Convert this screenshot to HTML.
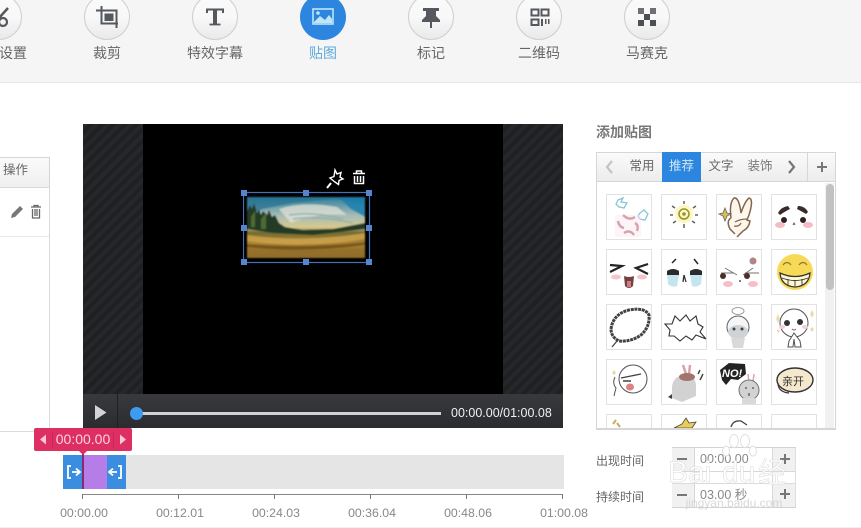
<!DOCTYPE html>
<html><head><meta charset="utf-8">
<style>
html,body{margin:0;padding:0;background:#fff}
#p{position:relative;width:861px;height:528px;overflow:hidden;background:#fff;font-family:"Liberation Sans","Noto Sans CJK SC",sans-serif;color:#555;filter:blur(.3px)}
.a{position:absolute}
.c{position:absolute;top:-6px;width:44px;height:44px;border-radius:50%;border:1px solid #cfcfcf;background:linear-gradient(#fafafa,#f8f8f8 50%,#e9e9e9)}
.l{position:absolute;top:44px;width:100px;text-align:center;font-size:14px;line-height:18px;color:#666}
.s{position:absolute;width:44px;height:44px;border:1px solid #e2e2e2;background:#fff;overflow:hidden}
.s svg{position:absolute;left:0;top:0;width:44px;height:44px;filter:blur(.35px);opacity:.92}
.h{position:absolute;width:6px;height:6px;background:#5585cc}
.t{position:absolute;top:505px;width:70px;text-align:center;font-size:12.3px;line-height:16px;color:#888}
.k{position:absolute;top:494px;width:1px;height:5px;background:#777}
.tab{position:absolute;top:152px;height:30px;line-height:29px;text-align:center;font-size:12.5px;color:#666}
</style></head><body><div id="p">

<div class="a" style="left:0;top:0;width:861px;height:82px;background:#f5f5f5;border-bottom:1px solid #e6e6e6"></div>

<div class="c" style="left:-24px"></div>
<div class="c" style="left:84px"></div>
<div class="c" style="left:192px"></div>
<div class="c" style="left:300px;width:46px;height:46px;border:0;background:#2c86e0"></div>
<div class="c" style="left:408px"></div>
<div class="c" style="left:516px"></div>
<div class="c" style="left:624px"></div>

<svg class="a" style="left:0;top:0" width="861" height="40" viewBox="0 0 861 40">
 <circle cx="3" cy="22" r="4" fill="none" stroke="#55585c" stroke-width="2.2"/>
 <path d="M-1 18L8 8" stroke="#55585c" stroke-width="2.5" fill="none"/>
 <path d="M96 10.500H116.500V28M101.500 6V23.500H118" fill="none" stroke="#55585c" stroke-width="2"/>
 <rect x="104.500" y="13.500" width="9" height="7.500" fill="#55585c"/>
 <path d="M207 13V9.500H223V13" fill="none" stroke="#55585c" stroke-width="2"/>
 <path d="M213 9.500H217V24H213Z" fill="#55585c"/>
 <path d="M209.500 24.500H220.500" stroke="#55585c" stroke-width="1.800"/>
 <rect x="313" y="9" width="20" height="15" fill="none" stroke="#bfe6f7" stroke-width="1.600"/>
 <path d="M314 22L320 16L325 20L329 15L332 19V23H314Z" fill="#bfe6f7"/>
 <circle cx="318" cy="13" r="1.800" fill="#bfe6f7"/>
 <path d="M423 8H439V11H436V16L440 20V22H422V20L426 16V11H423ZM430 22H432V28H430Z" fill="#55585c"/>
 <path d="M531.500 9.500h7v6h-7zM541.500 9.500h7v6h-7zM531.500 19.500h7v5.500h-7z" fill="none" stroke="#55585c" stroke-width="2"/>
 <path d="M541 19h2v7h-2zM545 19h1.500v5H545zM548 19h1.500v5H548z" fill="#55585c"/>
 <path d="M638 8h6v6h-6zM650 8h6v6h-6z" fill="#6e7074"/>
 <path d="M644 14h6v6h-6zM638 20h6v6h-6zM650 20h6v6h-6z" fill="#4c4f53"/>
</svg>

<div class="l" style="left:-37px">设置</div>
<div class="l" style="left:57px">裁剪</div>
<div class="l" style="left:165px">特效字幕</div>
<div class="l" style="left:273px;color:#5fa9dc">贴图</div>
<div class="l" style="left:381px">标记</div>
<div class="l" style="left:489px">二维码</div>
<div class="l" style="left:597px">马赛克</div>

<!-- left table -->
<div class="a" style="left:0;top:157px;width:49px;height:29px;background:linear-gradient(#fafafa,#efefef);border-top:1px solid #d5d5d5;border-bottom:1px solid #d9d9d9;border-right:1px solid #d5d5d5"></div>
<div class="a" style="left:3px;top:161px;font-size:12.500px;line-height:18px;color:#666">操作</div>
<div class="a" style="left:49px;top:186px;width:1px;height:245px;background:#d9d9d9"></div>
<div class="a" style="left:0;top:236px;width:49px;height:1px;background:#e8e8e8"></div>
<div class="a" style="left:0;top:431px;width:83px;height:1px;background:#dcdcdc"></div>
<svg class="a" style="left:8px;top:202px" width="36" height="20" viewBox="0 0 36 20">
 <path d="M3 16L4 12L12 4L15 7L7 15Z" fill="#777"/>
 <path d="M23 5H33M24.500 7V16H31.500V7M27 7V14M29 7V14M26 5V3.500H30V5" fill="none" stroke="#666" stroke-width="1.300"/>
</svg>

<!-- video -->
<div class="a" style="left:83px;top:124px;width:480px;height:270px;background:repeating-linear-gradient(135deg,#25272a 0 4px,#1e2022 4px 8px)"></div>
<div class="a" style="left:143px;top:124px;width:360px;height:270px;background:#000"></div>

<svg class="a" style="left:243px;top:165px" width="130" height="100" viewBox="0 0 130 100">
 <defs>
  <linearGradient id="sky" x1="0" y1="0" x2="0" y2="1"><stop offset="0" stop-color="#2f7f9c"/><stop offset=".3" stop-color="#a5bcb8"/><stop offset=".5" stop-color="#d9c98c"/><stop offset=".58" stop-color="#6f6a30"/><stop offset=".75" stop-color="#ad8432"/><stop offset="1" stop-color="#7a5c22"/></linearGradient>
  <filter id="b"><feGaussianBlur stdDeviation=".7"/></filter>
 </defs>
 <g filter="url(#b)">
 <rect x="4" y="32" width="118" height="61" fill="url(#sky)"/>
 <path d="M4 32H122V38L92 34L50 38L20 44L4 50Z" fill="#236f90" opacity=".7"/>
 <path d="M96 33H122V52L108 44Z" fill="#1a7fae" opacity=".85"/>
 <path d="M36 44Q60 36 94 42L104 50Q70 48 48 58Z" fill="#e2e2d6" opacity=".75"/>
 <path d="M46 50Q70 46 100 54M50 54Q75 50 110 58" stroke="#8fb0b0" fill="none" stroke-width="1.400"/>
 <path d="M4 46L7 40L9 44L11 38L14 48L16 44L18 50L20 46L24 50L26 45L29 52L32 50L36 58L42 62L60 65L90 64L122 58V64L70 70L30 68L4 64Z" fill="#243a26"/>
 <path d="M8 52L12 46V62H8ZM18 54L23 48V64H18Z" fill="#4f6a30"/>
 <path d="M4 70Q60 78 122 68V74Q60 84 4 76Z" fill="#d1a54e" opacity=".8"/>
 <path d="M4 79Q60 84 122 77V80Q60 88 4 82Z" fill="#5c3f14" opacity=".6"/>
 <path d="M4 85Q60 90 122 84V93H4Z" fill="#96702c" opacity=".8"/>
 </g>
 <rect x="0.500" y="27.500" width="126" height="70" fill="none" stroke="#4670b8" stroke-width="1.200"/>
 <path d="M92 5L94 9L98 7.500L97 12L100 14L96 15.500L95.500 19.500L92 17L90 15.500L87 13L91 11.500Z" fill="none" stroke="#fff" stroke-width="1.400"/>
 <path d="M88 18L84 23" stroke="#fff" stroke-width="2"/>
 <path d="M110 8.500H122M111.500 11V18.500H120.500V11M114.500 11V17M117.500 11V17M113.500 8V6H118.500V8" fill="none" stroke="#fff" stroke-width="1.500"/>
</svg>
<div class="h" style="left:241px;top:190px"></div><div class="h" style="left:303px;top:190px"></div><div class="h" style="left:366px;top:190px"></div>
<div class="h" style="left:241px;top:225px"></div><div class="h" style="left:366px;top:225px"></div>
<div class="h" style="left:241px;top:259px"></div><div class="h" style="left:303px;top:259px"></div><div class="h" style="left:366px;top:259px"></div>

<!-- controls -->
<div class="a" style="left:83px;top:394px;width:480px;height:34px;background:linear-gradient(#37393c,#2a2c2f)"></div>
<div class="a" style="left:117px;top:394px;width:1px;height:34px;background:#1f2022"></div>
<svg class="a" style="left:94px;top:404px" width="14" height="18"><path d="M1 1L12.500 8.500L1 16Z" fill="#d4d4d4"/></svg>
<div class="a" style="left:140px;top:412px;width:301px;height:3px;background:#d2d2d2"></div>
<div class="a" style="left:130px;top:407px;width:13px;height:13px;border-radius:50%;background:#3d9bf0"></div>
<div class="a" style="left:451px;top:405px;font-size:12.500px;line-height:16px;color:#f0f0f0;white-space:nowrap">00:00.00/01:00.08</div>

<!-- timeline -->
<div class="a" style="left:63px;top:455px;width:501px;height:34px;background:#e5e5e5"></div>
<div class="a" style="left:63px;top:455px;width:63px;height:34px;background:#3a8ddf"></div>
<div class="a" style="left:83px;top:455px;width:24px;height:34px;background:#b57de8"></div>
<div class="a" style="left:82px;top:451px;width:2px;height:38px;background:#8a2a70"></div>
<svg class="a" style="left:63px;top:455px" width="64" height="34" viewBox="0 0 64 34">
 <path d="M8 11H5V23H8M9 17H16M13 13.500L17 17L13 20.500" fill="none" stroke="#fff" stroke-width="1.800"/>
 <path d="M55 11H58V23H55M54 17H47M50 13.500L46 17L50 20.500" fill="none" stroke="#fff" stroke-width="1.800"/>
</svg>
<div class="a" style="left:34px;top:428px;width:98px;height:23px;background:#de2f63;border-radius:2px"></div>
<svg class="a" style="left:34px;top:428px" width="98" height="30" viewBox="0 0 98 30">
 <path d="M45 23H53L49 27Z" fill="#de2f63"/>
 <path d="M12 6.500V16.500L6 11.500Z" fill="#f6c7d6"/>
 <path d="M86 6.500V16.500L92 11.500Z" fill="#f6c7d6"/>
 <path d="M18.500 4V20M79.500 4V20" stroke="#cc2556" stroke-width="1"/>
</svg>
<div class="a" style="left:34px;top:431px;width:98px;text-align:center;font-size:14px;line-height:17px;color:#f9d3de">00:00.00</div>

<div class="a" style="left:83px;top:494px;width:480px;height:1px;background:#888"></div>
<div class="k" style="left:82px"></div><div class="k" style="left:178px"></div><div class="k" style="left:274px"></div><div class="k" style="left:370px"></div><div class="k" style="left:466px"></div><div class="k" style="left:562px"></div>
<div class="t" style="left:49px">00:00.00</div>
<div class="t" style="left:145px">00:12.01</div>
<div class="t" style="left:241px">00:24.03</div>
<div class="t" style="left:337px">00:36.04</div>
<div class="t" style="left:433px">00:48.06</div>
<div class="t" style="left:529px">01:00.08</div>
<div class="a" style="left:0;top:527px;width:861px;height:1px;background:#f0f0f0"></div>

<!-- right panel -->
<div class="a" style="left:596px;top:123px;font-size:14px;font-weight:700;line-height:18px;color:#6a6a6a;opacity:.9">添加贴图</div>
<div class="a" style="left:596px;top:152px;width:238px;height:276px;border:1px solid #d6d6d6;background:#fff"></div>
<div class="a" style="left:597px;top:153px;width:238px;height:29px;background:linear-gradient(#fafafa,#ececec);border-bottom:1px solid #d6d6d6;box-sizing:border-box"></div>
<div class="a" style="left:662px;top:152px;width:39px;height:30px;background:#2c86e0"></div>
<div class="tab" style="left:622px;width:40px">常用</div>
<div class="tab" style="left:662px;width:39px;color:#cfe6f8">推荐</div>
<div class="tab" style="left:701px;width:40px">文字</div>
<div class="tab" style="left:740px;width:40px;color:#777">装饰</div>
<div class="a" style="left:807px;top:153px;width:1px;height:29px;background:#d6d6d6"></div>
<svg class="a" style="left:596px;top:152px" width="240" height="30" viewBox="0 0 240 30">
 <path d="M16 9L11 15L16 21" fill="none" stroke="#c4c4c4" stroke-width="2.200"/>
 <path d="M193 9L198 15L193 21" fill="none" stroke="#777" stroke-width="2.200"/>
 <path d="M221 15H231M226 10V20" stroke="#777" stroke-width="2"/>
</svg>

<div class="a" style="left:825px;top:183px;width:9px;height:245px;background:#f1f1f1"></div>
<div class="a" style="left:826px;top:184px;width:8px;height:106px;border-radius:4px;background:#c2c2c2"></div>

<!-- row 1 -->
<div class="s" style="left:606px;top:194px"><svg viewBox="0 0 44 44">
 <path d="M11 5L16 3L14 7L20 8L17 13L12 12L9 9Z" fill="none" stroke="#7cc0d4" stroke-width="1.300"/>
 <path d="M33 18L37 15L41 19L38 25L33 24L31 21Z" fill="none" stroke="#7cc0d4" stroke-width="1.300"/>
 <rect x="8" y="20" width="26" height="22" fill="#fce8ee" opacity=".5"/>
 <path d="M16 20Q22 26 28 22M11 26Q12 32 17 33M28 28Q32 30 30 36M17 38Q23 34 27 40" fill="none" stroke="#d59aa8" stroke-width="2.400"/>
</svg></div>
<div class="s" style="left:661px;top:194px"><svg viewBox="0 0 44 44">
 <circle cx="22" cy="19" r="9" fill="#fdf7b8"/>
 <circle cx="22" cy="19" r="5" fill="none" stroke="#8a8a20" stroke-width="1.500"/>
 <circle cx="22" cy="19" r="1.800" fill="#8a8a20"/>
 <path d="M22 6V9M22 29V33M10 11L13 13M34 11L31 13M8 20H11M33 20H36M11 28L14 26M33 28L30 26" stroke="#555" stroke-width="1.500"/>
</svg></div>
<div class="s" style="left:716px;top:194px"><svg viewBox="0 0 44 44">
 <path d="M14 23Q12 8 17 3Q22 2 24 18Q28 6 32 3Q37 4 32 20L30 25L33 26Q32 33 26 36L20 42M14 23Q9 26 13 34L18 39" fill="#fdf6ec" stroke="#7a5a3a" stroke-width="1.500"/>
 <path d="M18 27Q23 24 30 24M17 31Q22 32 24 28" fill="none" stroke="#7a5a3a" stroke-width="1.300"/>
 <path d="M8 13L10 18L14 19L10 21L8 26L6 21L2 19L6 18Z" fill="#d9b84a" stroke="#555" stroke-width=".8"/>
</svg></div>
<div class="s" style="left:771px;top:194px"><svg viewBox="0 0 44 44">
 <path d="M6 18Q9 12 16 11L18 14Q12 17 8 20ZM26 11Q33 11 36 17L34 19Q29 16 25 14Z" fill="#2a1a1a"/>
 <circle cx="12" cy="25" r="3" fill="#1c1010"/><circle cx="31" cy="25" r="3" fill="#1c1010"/>
 <ellipse cx="8" cy="30" rx="5" ry="3" fill="#f4b6bf"/><ellipse cx="36" cy="30" rx="5" ry="3" fill="#f4b6bf"/>
 <path d="M21 30L22 28L23 30" stroke="#555" fill="none"/>
</svg></div>

<!-- row 2 -->
<div class="s" style="left:606px;top:249px"><svg viewBox="0 0 44 44">
 <path d="M3 22L15 16L3 15M41 14L29 18L41 24" fill="none" stroke="#111" stroke-width="2.200"/>
 <ellipse cx="9" cy="27" rx="5" ry="2.500" fill="#f4c2c8"/><ellipse cx="35" cy="27" rx="5" ry="2.500" fill="#f4c2c8"/>
 <path d="M17 26Q22 28 27 26L26 36Q22 40 18 36Z" fill="#6a3030"/>
 <path d="M20 31H24V37H20Z" fill="#c9757a"/>
</svg></div>
<div class="s" style="left:661px;top:249px"><svg viewBox="0 0 44 44">
 <path d="M10 13L14 9M32 9L36 14" stroke="#111" stroke-width="1.500"/>
 <path d="M5 21Q11 17 17 21V25H5ZM28 21Q34 17 40 21V25H28Z" fill="#1a1a1a"/>
 <path d="M5 25H17L15 36Q10 38 6 34ZM28 25H40L39 34Q34 38 30 36Z" fill="#bfe3ee"/>
 <path d="M21 32L22 25L24 32" fill="none" stroke="#222" stroke-width="1.300"/>
</svg></div>
<div class="s" style="left:716px;top:249px"><svg viewBox="0 0 44 44">
 <path d="M8 18L20 25M36 18L26 25M4 23H17M28 23H42" stroke="#666" stroke-width=".9"/>
 <circle cx="6" cy="26" r="3" fill="#3a2018"/><circle cx="30" cy="26" r="3" fill="#3a2018"/>
 <ellipse cx="11" cy="34" rx="5" ry="3" fill="#f7b9c6"/><ellipse cx="36" cy="34" rx="5" ry="3" fill="#f7b9c6"/>
 <circle cx="36" cy="11" r="3.500" fill="#a97b7b"/>
 <circle cx="23" cy="31" r="1" fill="#444"/>
</svg></div>
<div class="s" style="left:771px;top:249px"><svg viewBox="0 0 44 44">
 <circle cx="23" cy="22" r="18" fill="#f7d64a"/>
 <path d="M8 23Q23 30 38 23Q37 36 23 37Q9 36 8 23Z" fill="#fff8cc" stroke="#222" stroke-width="1.300"/>
 <path d="M10 28Q23 33 36 28M23 30V36M16 29V35M30 29V35" fill="none" stroke="#222" stroke-width=".9"/>
 <path d="M11 15Q15 10 19 15M27 15Q31 10 35 15" fill="none" stroke="#8a6d20" stroke-width="1.300"/>
</svg></div>

<!-- row 3 -->
<div class="s" style="left:606px;top:304px"><svg viewBox="0 0 44 44">
 <path d="M4 24Q6 9 22 5Q38 2 42 10Q43 22 34 30Q24 37 12 36Q4 32 4 24Z" fill="#fff" stroke="#333" stroke-width="3" stroke-dasharray="3 .7"/>
 <path d="M10 36L5 42" stroke="#333" stroke-width="1.300"/>
</svg></div>
<div class="s" style="left:661px;top:304px"><svg viewBox="0 0 44 44">
 <path d="M3 19L10 19L13 11L18 16L24 10L28 16L34 11L36 19L41 22L38 27L44 34L34 30L30 35L24 31L18 36L12 31L7 31L8 25Z" fill="#fff" stroke="#222" stroke-width="1.100"/>
</svg></div>
<div class="s" style="left:716px;top:304px"><svg viewBox="0 0 44 44">
 <ellipse cx="21" cy="6" rx="6" ry="3.500" fill="none" stroke="#999"/>
 <circle cx="21" cy="22" r="11" fill="#f6f6f6" stroke="#555"/>
 <ellipse cx="21" cy="27" rx="10" ry="7" fill="#ccd0d2"/>
 <circle cx="17" cy="24" r="1.500" fill="#333"/><circle cx="25" cy="24" r="1.500" fill="#333"/>
 <path d="M14 33H28L26 43H16Z" fill="#d6d6d6"/>
</svg></div>
<div class="s" style="left:771px;top:304px"><svg viewBox="0 0 44 44">
 <circle cx="22" cy="18" r="14" fill="#fff" stroke="#444"/>
 <circle cx="15" cy="18" r="3" fill="#222"/><circle cx="28" cy="17" r="3" fill="#222"/>
 <ellipse cx="10" cy="22" rx="3" ry="2" fill="#f4cdd2"/><ellipse cx="33" cy="22" rx="3" ry="2" fill="#f4cdd2"/>
 <path d="M20 24Q22 26 24 24" fill="none" stroke="#a44"/>
 <path d="M22 28L17 36L16 42H21L22 34L23 42H29L28 36Z" fill="#fff" stroke="#444"/>
 <path d="M4 14L6 9L8 14L6 18ZM38 9L40 5L42 9L40 13ZM5 26L6 24L8 26L6 28ZM38 24L40 22L42 24L40 27Z" fill="#ead9a8"/>
</svg></div>

<!-- row 4 -->
<div class="s" style="left:606px;top:359px"><svg viewBox="0 0 44 44">
 <circle cx="26" cy="19" r="14" fill="#fff" stroke="#444"/>
 <path d="M8 17Q5 23 9 28L7 36" fill="none" stroke="#444"/>
 <path d="M14 18L24 16L34 14M16 21H24" stroke="#333" stroke-width="1.400"/>
 <ellipse cx="23" cy="27" rx="4" ry="3.500" fill="#d97878"/>
 <path d="M7 10L9 13L7 15L5 13Z" fill="#e6d595"/>
</svg></div>
<div class="s" style="left:661px;top:359px"><svg viewBox="0 0 44 44">
 <path d="M10 26Q12 15 24 15Q34 16 34 26V36L20 42L10 38Z" fill="#cfcfcf"/>
 <path d="M21 5L24 14M28 5L27 14" stroke="#d79aa5" stroke-width="2.500"/>
 <ellipse cx="25" cy="17" rx="8" ry="4" fill="#9a6a60"/>
 <path d="M6 37L10 34V39Z" fill="#333"/>
 <path d="M38 10L36 14M41 14L38 20" stroke="#333" stroke-width="1.400"/>
</svg></div>
<div class="s" style="left:716px;top:359px"><svg viewBox="0 0 44 44">
 <path d="M3 10L12 3L28 4L29 14L21 20L14 19L9 25L5 20Z" fill="#111"/>
 <text x="5" y="17" font-family="Liberation Sans" font-size="11" font-weight="700" font-style="italic" fill="#fff">NO!</text>
 <path d="M31 14L32 22M37 14L36 22" stroke="#d6a0aa" stroke-width="1.500"/>
 <circle cx="32" cy="30" r="10" fill="#cfcfcf" stroke="#666"/>
 <path d="M28 28h2M35 28h2M32 33v3" stroke="#222"/>
 <rect x="25" y="38" width="14" height="6" fill="#d6d6d6"/>
</svg></div>
<div class="s" style="left:771px;top:359px"><svg viewBox="0 0 44 44">
 <ellipse cx="23" cy="20" rx="18" ry="12" fill="#f4e8c8" stroke="#222" stroke-width="1.400"/>
 <path d="M6 23Q6 32 17 33" fill="none" stroke="#222" stroke-width="1.200"/>
 <text x="10" y="25" font-family="Noto Sans CJK SC" font-size="11" fill="#222">亲开</text>
</svg></div>

<!-- row 5 partial -->
<div class="a" style="left:606px;top:414px;width:46px;height:14px;overflow:hidden"><div class="s" style="left:0;top:0"><svg viewBox="0 0 44 44"><path d="M6 9L9 5M10 8L13 12" stroke="#c9a34a" stroke-width="2"/></svg></div></div>
<div class="a" style="left:661px;top:414px;width:46px;height:14px;overflow:hidden"><div class="s" style="left:0;top:0"><svg viewBox="0 0 44 44"><path d="M12 13L20 9L24 3L27 8L34 7L30 13Z" fill="#e9c94a" stroke="#333" stroke-width=".8"/></svg></div></div>
<div class="a" style="left:716px;top:414px;width:46px;height:14px;overflow:hidden"><div class="s" style="left:0;top:0"><svg viewBox="0 0 44 44"><path d="M14 12Q16 5 24 6L30 10" fill="none" stroke="#333" stroke-width="1.300"/></svg></div></div>
<div class="a" style="left:771px;top:414px;width:46px;height:14px;overflow:hidden"><div class="s" style="left:0;top:0"></div></div>
<div class="a" style="left:596px;top:428px;width:240px;height:1px;background:#d6d6d6"></div>

<!-- time fields -->
<div class="a" style="left:596px;top:452px;font-size:12px;line-height:18px;color:#666">出现时间</div>
<div class="a" style="left:596px;top:488px;font-size:12px;line-height:18px;color:#666">持续时间</div>
<div class="a" style="left:672px;top:447px;width:124px;height:1px;background:#d2d2d2"></div>
<div class="a" style="left:672px;top:448px;width:22px;height:23px;background:#f1f1f1"></div>
<div class="a" style="left:773px;top:448px;width:23px;height:23px;background:#f1f1f1"></div>
<div class="a" style="left:672px;top:484px;width:22px;height:23px;background:#f1f1f1"></div>
<div class="a" style="left:773px;top:484px;width:23px;height:23px;background:#f1f1f1"></div>
<div class="a" style="left:672px;top:471px;width:124px;height:1px;background:#d8d8d8"></div>
<div class="a" style="left:672px;top:483px;width:124px;height:1px;background:#dcdcdc"></div>
<div class="a" style="left:672px;top:507px;width:124px;height:1px;background:#d2d2d2"></div>
<div class="a" style="left:694px;top:448px;width:1px;height:59px;background:#d8d8d8"></div>
<div class="a" style="left:772px;top:448px;width:1px;height:59px;background:#d8d8d8"></div>
<div class="a" style="left:795px;top:448px;width:1px;height:59px;background:#dedede"></div>
<div class="a" style="left:700px;top:451px;font-size:12.500px;line-height:16px;color:#888">00:00.00</div>
<div class="a" style="left:700px;top:487px;font-size:12.500px;line-height:16px;color:#888;white-space:nowrap">03.00 秒</div>
<svg class="a" style="left:672px;top:448px" width="124" height="60" viewBox="0 0 124 60">
 <path d="M5 11H15M5 47H15" stroke="#777" stroke-width="2"/>
 <path d="M108 11H118M113 6V16M108 46H118M113 41V51" stroke="#777" stroke-width="2"/>
</svg>
<!-- Baidu watermark -->
<div class="a" style="left:668px;top:458px;font-size:30px;line-height:30px;color:#fff;white-space:nowrap;-webkit-text-stroke:.5px #d8d8d8">Bai</div>
<div class="a" style="left:722px;top:458px;font-size:30px;line-height:30px;color:#fff;white-space:nowrap;-webkit-text-stroke:.5px #d8d8d8">du</div>
<div class="a" style="left:758px;top:458px;font-size:28px;line-height:30px;color:#fff;white-space:nowrap;-webkit-text-stroke:.5px #d8d8d8">经</div>
<svg class="a" style="left:722px;top:433px" width="36" height="26" viewBox="0 0 36 26">
 <g fill="#fff" stroke="#e0e0e0">
  <ellipse cx="12" cy="8" rx="4.500" ry="6.500"/><ellipse cx="23" cy="8" rx="4.500" ry="6.500"/>
  <ellipse cx="4" cy="18" rx="3.500" ry="5"/><ellipse cx="31" cy="18" rx="3.500" ry="5"/>
 </g>
</svg>
<div class="a" style="left:672px;top:497px;width:124px;text-align:center;font-size:12px;line-height:12px;color:#cfcfcf;white-space:nowrap;opacity:.8">jingyan.baidu.com</div>

</div></body></html>
